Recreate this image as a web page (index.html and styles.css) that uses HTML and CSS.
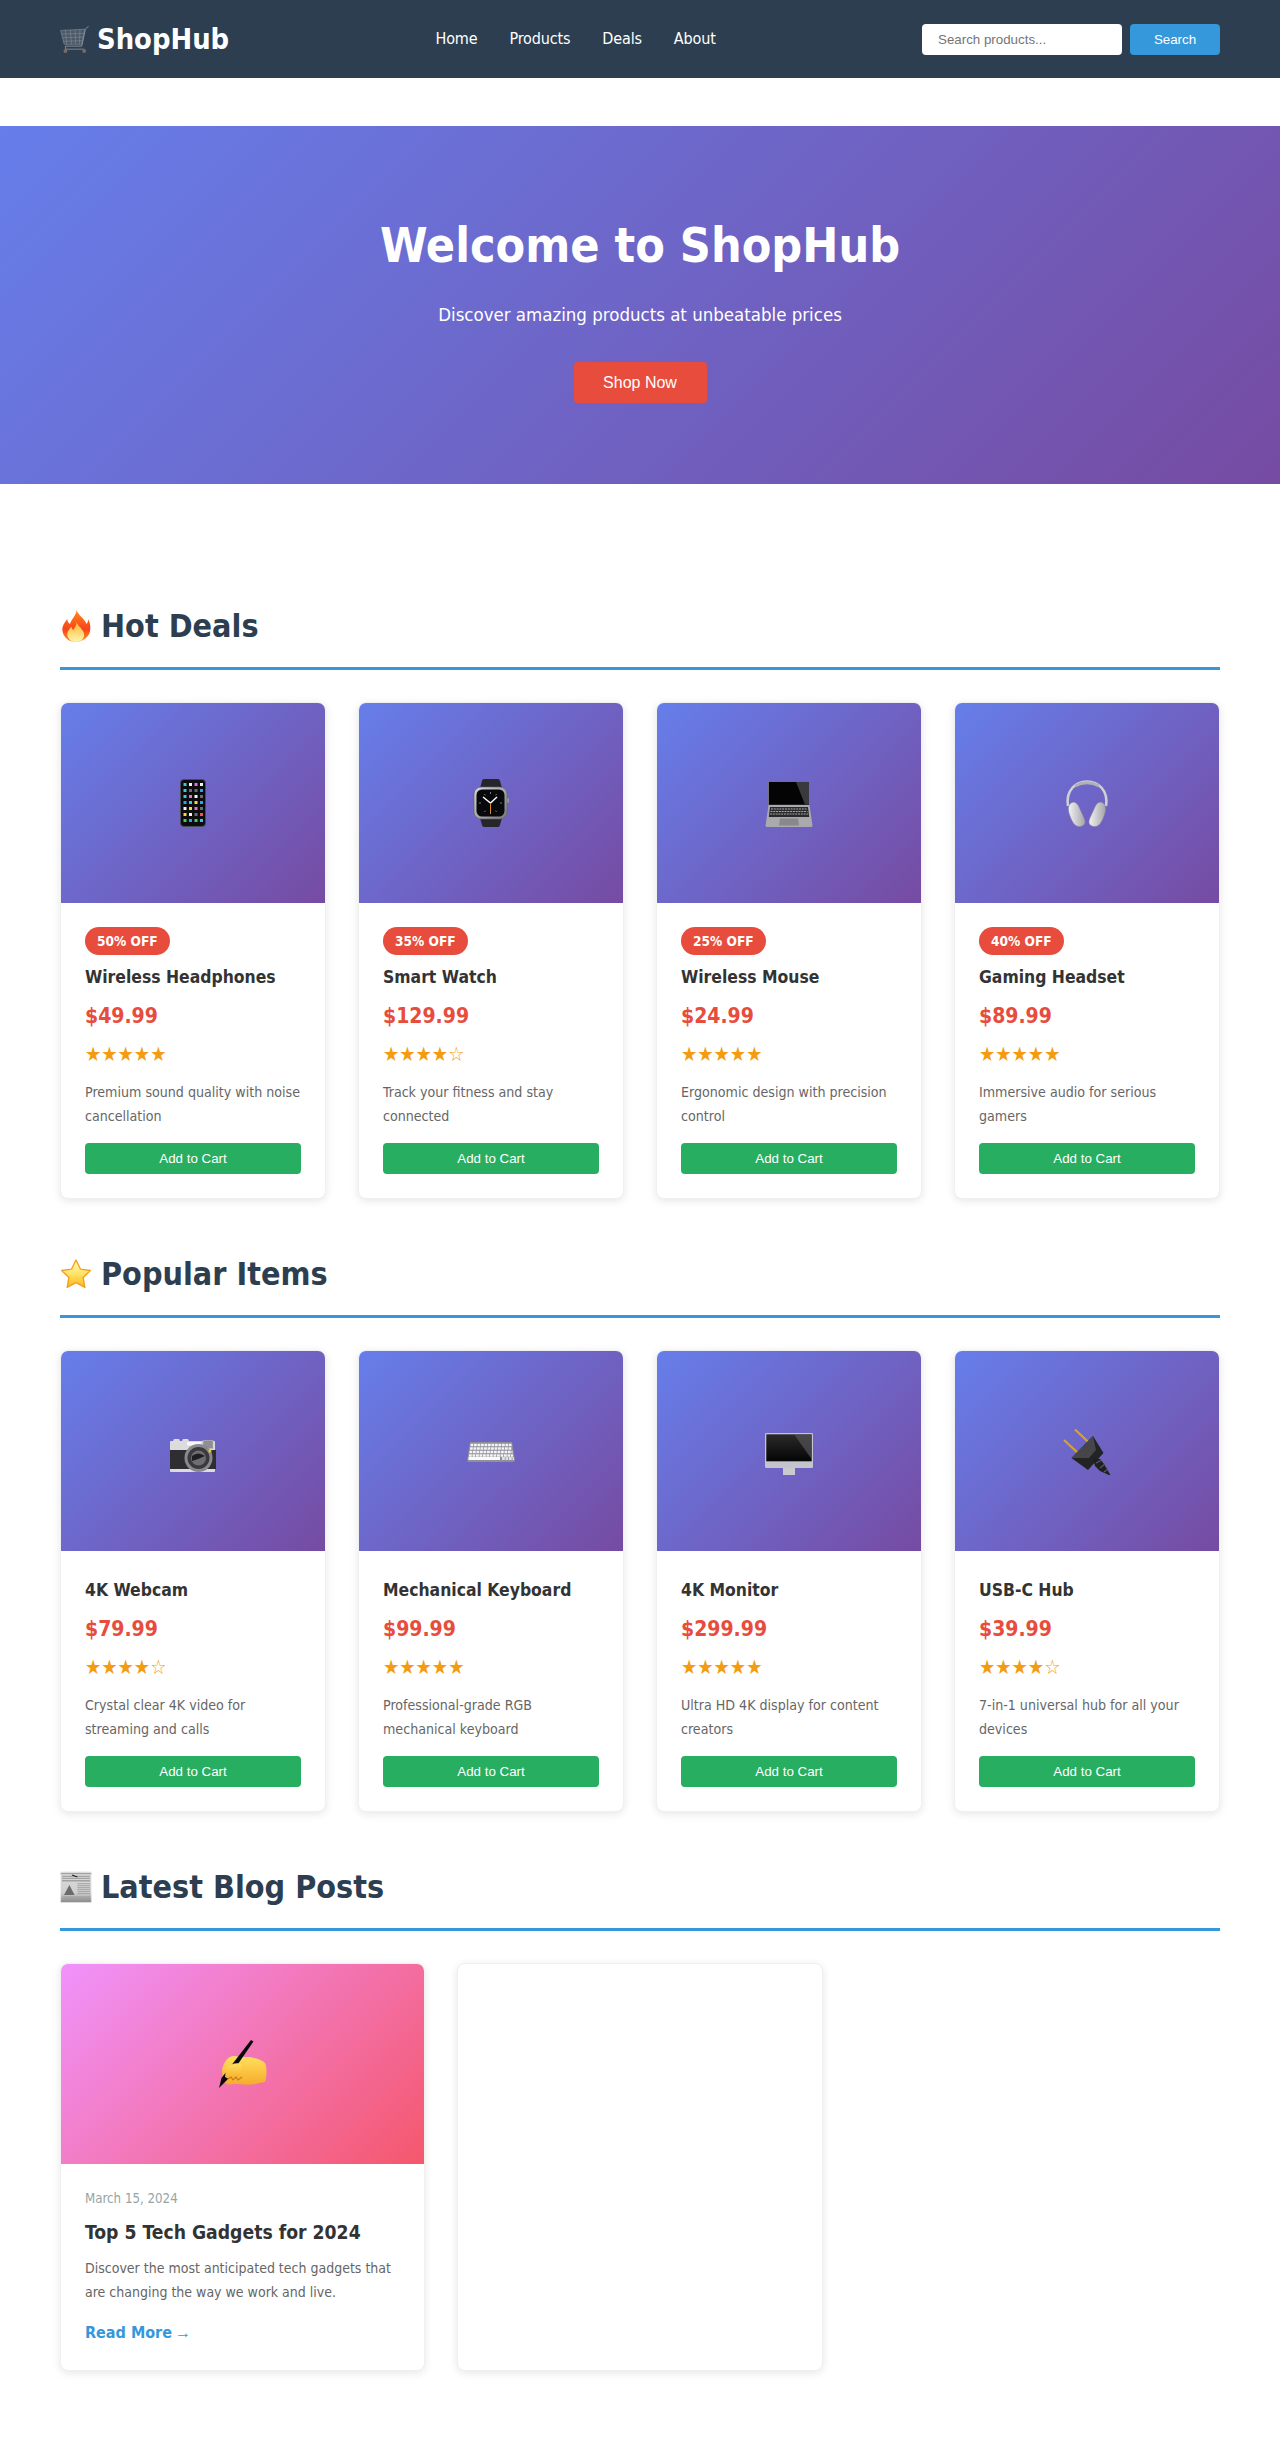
FILE: index.html
```html
<!DOCTYPE html>
<html lang="en">
<head>
<meta charset="utf-8">
<title>ShopHub</title>
<link rel="stylesheet" href="styles.css">
</head>
<body>
<svg class="sprite" aria-hidden="true">
  <defs>
    <linearGradient id="g-silver" x1="0" y1="0" x2="1" y2="1"><stop offset="0" stop-color="#d6d6da"/><stop offset="1" stop-color="#77777d"/></linearGradient>
    <linearGradient id="g-cup" x1="0" y1="0" x2="1" y2="0"><stop offset="0" stop-color="#f2f2f4"/><stop offset="1" stop-color="#a4a4aa"/></linearGradient>
    <linearGradient id="g-star" x1="0" y1="0" x2="0" y2="1"><stop offset="0" stop-color="#fff8c4"/><stop offset=".55" stop-color="#ffe25e"/><stop offset="1" stop-color="#ffb020"/></linearGradient>
    <linearGradient id="g-fire" x1="0" y1="0" x2="0" y2="1"><stop offset="0" stop-color="#ff8a1a"/><stop offset=".6" stop-color="#f8431c"/><stop offset="1" stop-color="#ff9a1f"/></linearGradient>
    <linearGradient id="g-flame" x1="0" y1="0" x2="0" y2="1"><stop offset="0" stop-color="#ffb52e"/><stop offset="1" stop-color="#fff6b0"/></linearGradient>
    <linearGradient id="g-screen" x1="0" y1="0" x2="0" y2="1"><stop offset="0" stop-color="#2a2a2a"/><stop offset="1" stop-color="#050505"/></linearGradient>
    <linearGradient id="g-hand" x1="0" y1="0" x2="0" y2="1"><stop offset="0" stop-color="#ffe05e"/><stop offset="1" stop-color="#f7ab2a"/></linearGradient>
    <linearGradient id="g-paper" x1="0" y1="0" x2="0" y2="1"><stop offset="0" stop-color="#dcdcdc"/><stop offset=".7" stop-color="#cfcfcf"/><stop offset="1" stop-color="#8f8f8f"/></linearGradient>

    <symbol id="i-cart" viewBox="0 0 48 48">
      <path d="M47 2l-5 5-6 28H9" fill="none" stroke="#8a9097" stroke-width="1.6"/>
      <path d="M1 9l40-2-5 25H7z" fill="#66707c" fill-opacity=".55" stroke="#8a9097"/>
      <path d="M9 8l2 24M17 8l2 24M25 8l1 24M33 7l-1 25M3 15l37-1M4 21l35-1M5 27l32-1" fill="none" stroke="#8f959c" stroke-width=".8"/>
      <path d="M9 35v5h31" fill="none" stroke="#8a9097" stroke-width="1.5"/>
      <circle cx="9" cy="43" r="3.2" fill="#7d6a5c"/><circle cx="40" cy="43" r="3.2" fill="#7d6a5c"/>
    </symbol>

    <symbol id="i-fire" viewBox="0 0 48 48">
      <path d="M25 0c2 8 11 12 15 21 2-2 2-5 2-7 4 6 4 13 3 18-2 9-11 16-21 16S6 42 4 33C2 24 7 19 11 13c0 3 1 6 4 8 2-7 9-12 10-21z" fill="url(#g-fire)"/>
      <path d="M25 18c1 6 10 10 11 18 1 7-5 12-12 12s-13-5-13-12c0-5 3-7 6-11 1 3 2 4 3 5 2-3 5-7 5-12z" fill="url(#g-flame)"/>
    </symbol>

    <symbol id="i-star" viewBox="0 0 48 48">
      <path d="M24 3l6.600 13.600 15 2.100-10.900 10.500 2.600 14.900L24 36.900l-13.300 7.200 2.600-14.900L2.400 18.700l15-2.100z" fill="url(#g-star)" stroke="#f2a01e" stroke-width="2" stroke-linejoin="round"/>
    </symbol>

    <symbol id="i-news" viewBox="0 0 48 48">
      <rect x="1" y="1" width="46" height="46" fill="url(#g-paper)"/>
      <path d="M1 4h46M3 8h42M3 11h42" stroke="#777" stroke-width="1"/>
      <path d="M18 6l8 3" stroke="#222" stroke-width="2"/>
      <rect x="3" y="14" width="42" height="1.500" fill="#888"/>
      <path d="M6 36l8-15 8 15z" fill="#6c6c6c"/>
      <path d="M26 19h19M26 22h19M26 25h19M26 28h19M26 31h19M26 34h19M4 39h41M4 42h41M4 45h41" stroke="#8c8c8c" stroke-width="1"/>
    </symbol>

    <symbol id="i-phone" viewBox="0 0 48 48">
      <rect x="11.500" y=".5" width="25" height="47" rx="3.500" fill="#0c0c0e" stroke="#4a4a52"/>
      <path d="M14.500 4h3v3h-3zM14.500 10h3v3h-3zM14.500 16h3v3h-3zM20 22h3v3h-3zM31 40h3v3h-3z" fill="#37c9d8"/>
      <path d="M20 4h3v3h-3zM31 4h3v3h-3zM14.500 28h3v3h-3zM25.500 16h3v3h-3zM20 34h3v3h-3z" fill="#f4f4f4"/>
      <path d="M25.500 4h3v3h-3zM20 16h3v3h-3zM25.500 28h3v3h-3z" fill="#e36fd8"/>
      <path d="M31 10h3v3h-3zM14.500 22h3v3h-3zM31 22h3v3h-3zM20 40h3v3h-3z" fill="#1fa9ee"/>
      <path d="M20 10h3v3h-3zM25.500 10h3v3h-3zM31 16h3v3h-3zM31 28h3v3h-3zM25.500 34h3v3h-3z" fill="#6b6b70"/>
      <path d="M14.500 34h3v3h-3zM25.500 22h3v3h-3zM20 28h3v3h-3z" fill="#f5d63c"/>
      <path d="M14.500 40h3v3h-3zM25.500 40h3v3h-3z" fill="#3fcf68"/>
      <path d="M31 34h3v3h-3z" fill="#ea5a4a"/>
    </symbol>

    <symbol id="i-watch" viewBox="0 0 48 48">
      <path d="M13 9l2-7q.3-2 2-2h14q1.700 0 2 2l2 7zM13 39l2 7q.3 2 2 2h14q1.700 0 2-2l2-7z" fill="#26262a"/>
      <rect x="39" y="19" width="3" height="5" rx="1" fill="#9a9aa0"/>
      <rect x="7" y="8" width="33" height="32" rx="7" fill="url(#g-silver)" stroke="#5c5c62" stroke-width=".6"/>
      <rect x="9.500" y="10.500" width="28" height="27" rx="5.500" fill="#08090c"/>
      <path d="M23.500 13v2M23.500 33v2M12 24h2M33 24h2M17.500 15l.8 1.300M29.500 15l-.8 1.300M17.500 33l.8-1.300M29.500 33l-.8-1.300" stroke="#888" stroke-width=".9"/>
      <path d="M16 18l7.500 6L30 18" fill="none" stroke="#fff" stroke-width="1.400"/>
      <path d="M23.500 24v11" stroke="#d8892a" stroke-width="1"/>
    </symbol>

    <symbol id="i-laptop" viewBox="0 0 48 48">
      <rect x="3" y="2" width="42" height="24" rx="1.500" fill="#8f8f97"/>
      <rect x="3.800" y="2.800" width="40.400" height="23" fill="#040405"/>
      <path d="M31 3l9 22.500h4V3z" fill="#3a3a3e"/>
      <path d="M3.500 26h41l3 20.500q0 1.500-2 1.500H2.500q-2 0-2-1.500z" fill="#a9a9ae"/>
      <path d="M5 28h38l1.200 10H3.800z" fill="#2a2a2d"/>
      <path d="M6 30h36M5.500 32.500h37M5 35h38" stroke="#a8a8ac" stroke-width="1.100" stroke-dasharray="2 .8"/>
      <path d="M15 39.500h18l1 7H14z" fill="#88888d"/>
    </symbol>

    <symbol id="i-phones" viewBox="0 0 48 48">
      <path d="M5 27C2.500 11 13 2.500 24 2.500S45.500 11 43 27" fill="none" stroke="#d0d0d4" stroke-width="2.600"/>
      <path d="M12 7Q24 .5 36 7" fill="none" stroke="#b0b0b6" stroke-width="2.800"/>
      <path d="M7 25c3-3 7-2 9 3s6 12 6 15-3 4.500-6 4.500-6-3-8-8-4-11-1-14.500z" fill="url(#g-cup)" stroke="#8d8d94" stroke-width=".5"/>
      <path d="M41 25c-3-3-7-2-9 3s-6 12-6 15 3 4.500 6 4.500 6-3 8-8 4-11 1-14.500z" fill="url(#g-cup)" stroke="#8d8d94" stroke-width=".5"/>
    </symbol>

    <symbol id="i-camera" viewBox="0 0 48 48">
      <path d="M1 44V15q0-1 1-1h2l1-2h5l1 2h2l1-2h5l1 2h25q1 0 1 1v29q0 1-1 1H2q-1 0-1-1z" fill="#dcdcdf"/>
      <path d="M1 23h46v19H1z" fill="#2e2e32"/>
      <rect x="18" y="15" width="14" height="3.500" fill="#f7f7f7"/>
      <rect x="34" y="13.500" width="10" height="8" fill="#8f8f92" stroke="#bbb" stroke-width=".6"/>
      <circle cx="29.500" cy="31" r="14" fill="#8a8a8e"/>
      <circle cx="29.500" cy="31" r="11" fill="#3a3a3e"/>
      <circle cx="29.500" cy="31" r="7.500" fill="#6d6d72"/>
      <path d="M23 29q6-5 13 0-6 3-13 5z" fill="#1f1f22"/>
      <circle cx="41" cy="24" r="1.500" fill="#f2c230"/>
    </symbol>

    <symbol id="i-keyboard" viewBox="0 0 48 48">
      <path d="M3 15h42l3 18q0 2-2 2H2q-2 0-2-2z" fill="#8f8f98"/>
      <path d="M3.500 18h41M3 21.500h42M2.500 25h43M2 28.500h44" stroke="#f4f4f6" stroke-width="2.600" stroke-dasharray="2.800 .7"/>
      <path d="M1.500 31.500H33" stroke="#fafafa" stroke-width="3"/>
      <path d="M35 31.500h12" stroke="#e0e0e4" stroke-width="3" stroke-dasharray="2.800 .7"/>
    </symbol>

    <symbol id="i-monitor" viewBox="0 0 48 48">
      <rect x="18" y="40" width="12" height="8" fill="#c9c9cf"/>
      <rect x="0" y="6" width="48" height="35" rx="1.200" fill="#c4c4cc"/>
      <rect x="1.300" y="7.300" width="45.400" height="27" fill="url(#g-screen)"/>
      <path d="M29 7.300h17.700v25z" fill="#55555b" fill-opacity=".7"/>
    </symbol>

    <symbol id="i-plug" viewBox="0 0 48 48">
      <path d="M12 2.500l16 15M1 13l15 14" stroke="#d9a520" stroke-width="2.200" fill="none"/>
      <path d="M30 9l10.500 17L25 43 8.500 31z" fill="#232326"/>
      <path d="M30 9l3 14-7 8-17.500 0z" fill="#46464a"/>
      <path d="M30 31l7 1 4 5 7 12-11-5-5-5z" fill="#1f1f22"/>
      <path d="M33 36l6-3M37 41l5-4M41 45l4-3" stroke="#5c5c60" stroke-width="1.100"/>
    </symbol>

    <symbol id="i-hand" viewBox="0 0 48 48">
      <path d="M3 30C5 21 9 17 14 16l12 1c7 0 16 2 20 6 2 4 2 13 0 19l-6 1c-8 3-18 1-26 1-4 1-8 1-10-4z" fill="url(#g-hand)"/>
      <path d="M32 0l2.500 1.500L8 40 0 48l2.500-10z" fill="#0a0a0a"/>
      <path d="M7 28c4-4 11-6 16-4l-3 14c-4 2-10 2-14-1z" fill="url(#g-hand)"/>
      <path d="M9 39l3-2 2 3 3-3 2 3 4-3" fill="none" stroke="#c27c14" stroke-width="1.100"/>
    </symbol>
  </defs>
</svg>

<nav class="nav">
  <div class="brand"><svg class="emoji-brand"><use href="#i-cart"/></svg> ShopHub</div>
  <ul class="links"><li>Home</li><li>Products</li><li>Deals</li><li>About</li></ul>
  <div class="search"><input class="search-input" placeholder="Search products..."><button class="search-btn">Search</button></div>
</nav>

<section class="hero">
  <h1>Welcome to ShopHub</h1>
  <p>Discover amazing products at unbeatable prices</p>
  <button class="hero-btn">Shop Now</button>
</section>

<main class="container">
  <section class="section">
    <h2 class="title"><svg class="emoji-title"><use href="#i-fire"/></svg> Hot Deals</h2>
    <div class="products">
      <article class="card">
        <div class="thumb"><svg class="emoji"><use href="#i-phone"/></svg></div>
        <div class="body">
          <span class="badge">50% OFF</span>
          <h3>Wireless Headphones</h3>
          <div class="price">$49.99</div>
          <div class="stars">★★★★★</div>
          <p class="desc">Premium sound quality with noise cancellation</p>
          <button class="add">Add to Cart</button>
        </div>
      </article>
      <article class="card">
        <div class="thumb"><svg class="emoji"><use href="#i-watch"/></svg></div>
        <div class="body">
          <span class="badge">35% OFF</span>
          <h3>Smart Watch</h3>
          <div class="price">$129.99</div>
          <div class="stars">★★★★☆</div>
          <p class="desc">Track your fitness and stay connected</p>
          <button class="add">Add to Cart</button>
        </div>
      </article>
      <article class="card">
        <div class="thumb"><svg class="emoji"><use href="#i-laptop"/></svg></div>
        <div class="body">
          <span class="badge">25% OFF</span>
          <h3>Wireless Mouse</h3>
          <div class="price">$24.99</div>
          <div class="stars">★★★★★</div>
          <p class="desc">Ergonomic design with precision control</p>
          <button class="add">Add to Cart</button>
        </div>
      </article>
      <article class="card">
        <div class="thumb"><svg class="emoji"><use href="#i-phones"/></svg></div>
        <div class="body">
          <span class="badge">40% OFF</span>
          <h3>Gaming Headset</h3>
          <div class="price">$89.99</div>
          <div class="stars">★★★★★</div>
          <p class="desc">Immersive audio for serious gamers</p>
          <button class="add">Add to Cart</button>
        </div>
      </article>
    </div>
  </section>

  <section class="section">
    <h2 class="title"><svg class="emoji-title"><use href="#i-star"/></svg> Popular Items</h2>
    <div class="products">
      <article class="card">
        <div class="thumb"><svg class="emoji"><use href="#i-camera"/></svg></div>
        <div class="body">
          <h3>4K Webcam</h3>
          <div class="price">$79.99</div>
          <div class="stars">★★★★☆</div>
          <p class="desc">Crystal clear 4K video for streaming and calls</p>
          <button class="add">Add to Cart</button>
        </div>
      </article>
      <article class="card">
        <div class="thumb"><svg class="emoji"><use href="#i-keyboard"/></svg></div>
        <div class="body">
          <h3>Mechanical Keyboard</h3>
          <div class="price">$99.99</div>
          <div class="stars">★★★★★</div>
          <p class="desc">Professional-grade RGB mechanical keyboard</p>
          <button class="add">Add to Cart</button>
        </div>
      </article>
      <article class="card">
        <div class="thumb"><svg class="emoji"><use href="#i-monitor"/></svg></div>
        <div class="body">
          <h3>4K Monitor</h3>
          <div class="price">$299.99</div>
          <div class="stars">★★★★★</div>
          <p class="desc">Ultra HD 4K display for content creators</p>
          <button class="add">Add to Cart</button>
        </div>
      </article>
      <article class="card">
        <div class="thumb"><svg class="emoji"><use href="#i-plug"/></svg></div>
        <div class="body">
          <h3>USB-C Hub</h3>
          <div class="price">$39.99</div>
          <div class="stars">★★★★☆</div>
          <p class="desc">7-in-1 universal hub for all your devices</p>
          <button class="add">Add to Cart</button>
        </div>
      </article>
    </div>
  </section>

  <section class="section">
    <h2 class="title"><svg class="emoji-title"><use href="#i-news"/></svg> Latest Blog Posts</h2>
    <div class="posts">
      <article class="card">
        <div class="thumb thumb-blog"><svg class="emoji"><use href="#i-hand"/></svg></div>
        <div class="body">
          <div class="date">March 15, 2024</div>
          <h3 class="post-title">Top 5 Tech Gadgets for 2024</h3>
          <p class="post-desc">Discover the most anticipated tech gadgets that are changing the way we work and live.</p>
          <a class="more">Read More <span class="arrow">→</span></a>
        </div>
      </article>
      <article class="card"></article>
    </div>
  </section>
</main>
</body>
</html>
```
FILE: styles.css
```css
* { margin: 0; padding: 0; box-sizing: border-box; }
body { font-family: "DejaVu Sans Condensed", "DejaVu Sans", sans-serif; line-height: 1.6; color: #333; background: #fff; }
.sprite { display: block; width: 0; height: 0; overflow: hidden; }
button, input { font-family: "Liberation Sans", Arial, sans-serif; }

.nav { background: #2c3e50; padding: 16px 60px; display: flex; align-items: center; justify-content: space-between; color: #fff; }
.brand { font-size: 28.8px; font-weight: 700; white-space: nowrap; }
.emoji-brand { width: 29px; height: 29px; vertical-align: -5px; margin-right: -1px; }
.links { display: flex; gap: 32px; list-style: none; font-size: 16px; letter-spacing: -0.15px; }
.search { display: flex; gap: 8px; }
.search-input { width: 200px; height: 31px; border: 0; border-radius: 4px; padding: 8px 16px; font-size: 13.33px; }
.search-btn { width: 90px; height: 31px; background: #3498db; color: #fff; border: 0; border-radius: 4px; font-size: 13.33px; }

.hero { margin-top: 48px; background: linear-gradient(135deg, #667eea, #764ba2); color: #fff; text-align: center; padding: 81px 32px 81px; }
.hero h1 { font-size: 48px; line-height: 77px; margin-bottom: 15px; }
.hero p { font-size: 18.5px; line-height: 31px; margin-bottom: 32px; }
.hero-btn { display: block; margin: 0 auto; width: 133px; height: 41px; background: #e74c3c; color: #fff; border: 0; border-radius: 4px; font-size: 16px; }

.container { padding: 116px 60px 66px; }
.section { margin-bottom: 49px; }
.section:last-child { margin-bottom: 0; }
.title { font-size: 32px; line-height: 53px; height: 70px; color: #2c3e50; padding-bottom: 16px; border-bottom: 3px solid #3498db; margin-bottom: 32px; }
.emoji-title { width: 32px; height: 32px; vertical-align: -5px; margin-right: -1px; }

.products { display: grid; grid-template-columns: repeat(4, 1fr); gap: 32px; }
.posts { display: grid; grid-template-columns: repeat(3, 1fr); gap: 32px; }
.card { background: #fff; border: 1px solid #f0f0f0; border-radius: 8px; box-shadow: 0 2px 8px rgba(0, 0, 0, 0.1); overflow: hidden; }
.thumb { height: 200px; display: flex; align-items: center; justify-content: center; background: linear-gradient(135deg, #667eea, #764ba2); }
.thumb-blog { background: linear-gradient(135deg, #f093fb, #f5576c); }
.emoji { width: 48px; height: 48px; }
.body { padding: 24px; }

.badge { display: block; width: fit-content; height: 28px; line-height: 28px; padding: 0 12px; margin-bottom: 8px; background: #e74c3c; color: #fff; border-radius: 20px; font-size: 13.6px; font-weight: 700; }
h3 { font-size: 17.4px; line-height: 28px; margin-top: 1px; margin-bottom: 9px; color: #333; }
.price { font-size: 21px; line-height: 33px; font-weight: 700; color: #e74c3c; margin-bottom: 9px; }
.stars { font-size: 20.2px; line-height: 25px; color: #f39c12; margin-bottom: 13px; }
.desc { font-size: 14.1px; line-height: 24px; color: #666; margin-bottom: 15px; }
.add { display: block; width: 100%; height: 31px; background: #27ae60; color: #fff; border: 0; border-radius: 4px; font-size: 13.33px; }

.date { font-size: 13.2px; line-height: 21px; color: #95a5a6; margin-bottom: 8px; }
.post-title { font-size: 19.2px; line-height: 31px; margin-top: 0; margin-bottom: 8px; }
.post-desc { font-size: 14px; line-height: 24px; color: #666; margin-bottom: 16px; }
.more { font-size: 16px; font-weight: 700; color: #3498db; }
.arrow { font-family: "Liberation Sans", sans-serif; font-weight: 400; margin-left: -2px; }
```
